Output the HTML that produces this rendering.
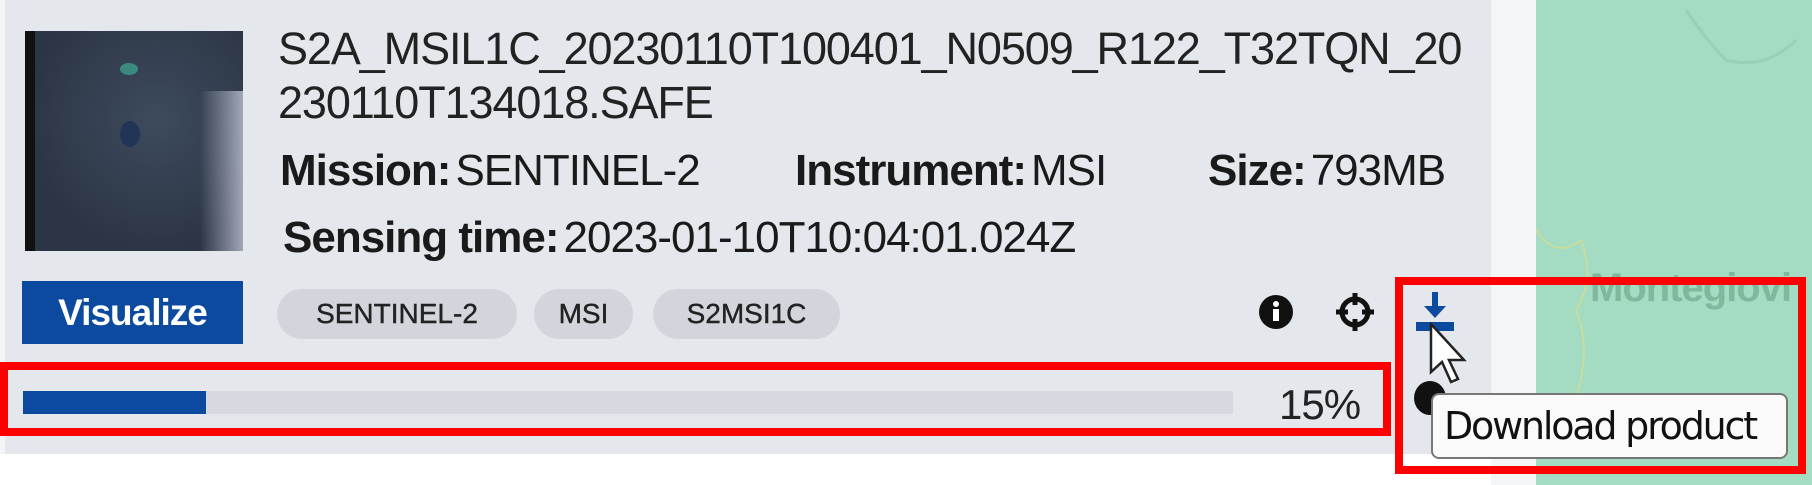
<!DOCTYPE html>
<html><head><style>
body{margin:0;width:1812px;height:485px;position:relative;overflow:hidden;background:#fff;font-family:"Liberation Sans",Arial,sans-serif;color:#1a1a1a}
.a{position:absolute}
.chip{position:absolute;top:289px;height:50px;border-radius:25px;background:#d3d5dd;font-size:28px;line-height:50px;text-align:center;color:#222;-webkit-text-stroke:0.4px #222}
.lab{font-weight:bold;margin-right:5px}
.row{font-size:44px;letter-spacing:-1px;white-space:nowrap}
</style></head><body>
<div class="a" style="left:0;top:0;width:1491px;height:454px;background:#e4e7ec"></div>
<div class="a" style="left:0;top:0;width:5px;height:454px;background:#f3f4f6"></div>
<div class="a" style="left:1491px;top:0;width:45px;height:485px;background:#f4f5f7"></div>
<div class="a" style="left:1536px;top:0;width:276px;height:485px;background:#a3dbc3"></div>
<svg class="a" style="left:1536px;top:0" width="276" height="485"><path d="M0 230 Q20 260 45 240 Q60 280 40 310 Q60 360 30 420" fill="none" stroke="#c9dc9e" stroke-width="2"/><path d="M150 10 Q170 40 190 60 Q230 70 260 40" fill="none" stroke="#95d1b4" stroke-width="3"/></svg>
<div class="a" style="left:1590px;top:266px;font-size:40px;font-weight:bold;color:#7fb89c;letter-spacing:-1px">Montegiovi</div>
<div class="a" style="left:25px;top:31px;width:218px;height:220px;background:radial-gradient(circle at 60% 40%,#3d4b5c,#2c3546 70%);overflow:hidden">
<div class="a" style="left:0;top:0;width:10px;height:220px;background:#111"></div>
<div class="a" style="left:95px;top:90px;width:20px;height:26px;border-radius:50%;background:#233556"></div>
<div class="a" style="left:95px;top:32px;width:18px;height:12px;border-radius:50%;background:#3b8a80"></div>
<div class="a" style="left:175px;top:60px;width:43px;height:160px;background:linear-gradient(90deg,rgba(200,205,220,0),rgba(210,214,228,.7))"></div>
</div>
<div class="a" style="left:278px;top:22px;font-size:45px;line-height:54px;letter-spacing:-1.1px;color:#222;width:1250px;white-space:nowrap">S2A_MSIL1C_20230110T100401_N0509_R122_T32TQN_20<br>230110T134018.SAFE</div>
<div class="a row" style="left:280px;top:146px"><span class="lab">Mission:</span>SENTINEL-2</div>
<div class="a row" style="left:795px;top:146px"><span class="lab">Instrument:</span>MSI</div>
<div class="a row" style="left:1208px;top:146px"><span class="lab">Size:</span>793MB</div>
<div class="a row" style="left:283px;top:213px"><span class="lab">Sensing time:</span>2023-01-10T10:04:01.024Z</div>
<div class="a" style="left:22px;top:281px;width:221px;height:63px;background:#0b4a9f;color:#fff;font-weight:bold;font-size:37px;line-height:63px;text-align:center;letter-spacing:-1px">Visualize</div>
<div class="chip" style="left:277px;width:240px">SENTINEL-2</div>
<div class="chip" style="left:534px;width:99px">MSI</div>
<div class="chip" style="left:653px;width:187px">S2MSI1C</div>
<svg class="a" style="left:1256px;top:292px" width="40" height="40"><circle cx="20" cy="20" r="17" fill="#111"/><rect x="17" y="17" width="6" height="12" fill="#fff"/><circle cx="20" cy="12" r="3" fill="#fff"/></svg>
<svg class="a" style="left:1334px;top:291px" width="42" height="42"><circle cx="21" cy="21" r="13" fill="none" stroke="#111" stroke-width="5"/><path d="M21 2v12M21 28v12M2 21h12M28 21h12" stroke="#111" stroke-width="5"/></svg>
<svg class="a" style="left:1410px;top:290px" width="50" height="50"><path d="M25 2v22" stroke="#0b4a9f" stroke-width="6"/><path d="M14 16l11 12 11-12z" fill="#0b4a9f"/><rect x="6" y="32" width="38" height="9" fill="#0b4a9f"/></svg>
<div class="a" style="left:1414px;top:381px;width:32px;height:34px;border-radius:50%;background:#111"></div>
<svg class="a" style="left:1428px;top:322px" width="40" height="65"><path d="M3 2v48l11-10 9 20 7-3-9-19h15z" fill="#fff" stroke="#222" stroke-width="2.5"/></svg>
<div class="a" style="left:23px;top:391px;width:1210px;height:23px;background:#d6d9df"></div>
<div class="a" style="left:23px;top:391px;width:183px;height:23px;background:#0b4a9f"></div>
<div class="a" style="left:1279px;top:381px;font-size:42px;letter-spacing:-1px;color:#222">15%</div>
<div class="a" style="left:1431px;top:393px;width:357px;height:66px;background:#fafafb;border:2px solid #777;border-radius:8px;box-sizing:border-box;font-size:38px;line-height:62px;padding-left:11px;font-family:'DejaVu Sans',sans-serif;letter-spacing:-2.2px;color:#111;white-space:nowrap">Download product</div>
<div class="a" style="left:0;top:362px;width:1391px;height:74px;border:8px solid #f00;box-sizing:border-box"></div>
<div class="a" style="left:1395px;top:277px;width:411px;height:197px;border:8px solid #f00;box-sizing:border-box"></div>
</body></html>
